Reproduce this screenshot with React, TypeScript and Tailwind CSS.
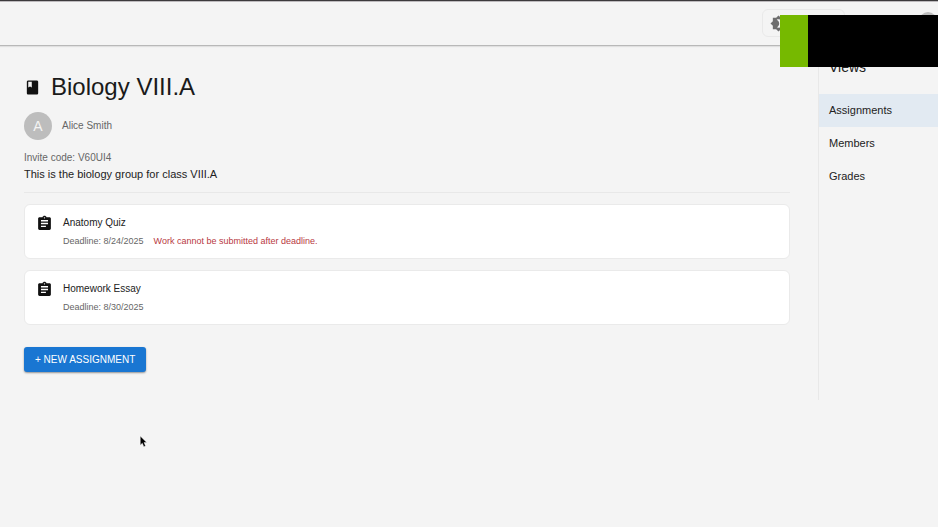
import { MdAssignment, MdBrightness4, MdClass } from "react-icons/md";

type Assignment = {
  id: string;
  title: string;
  deadline: string;
  warning?: string;
};

const assignments: Assignment[] = [
  {
    id: "anatomy-quiz",
    title: "Anatomy Quiz",
    deadline: "8/24/2025",
    warning: "Work cannot be submitted after deadline.",
  },
  { id: "homework-essay", title: "Homework Essay", deadline: "8/30/2025" },
];

const views = ["Assignments", "Members", "Grades"];

function Header() {
  return (
    <header className="flex h-[46px] items-start justify-end gap-[74px] border-t border-b border-t-[#3c3a3c] border-b-[#b8b8b8] pr-px shadow-[inset_0_1px_0_#bdbabd,0_1px_1px_rgba(0,0,0,0.08)]">
      <button
        type="button"
        aria-label="Toggle theme"
        className="mt-2 flex h-7 w-[83px] items-center rounded-md border border-[#e9e9e9] pl-[7px] text-[#6e6e6e]"
      >
        <MdBrightness4 size={17} />
      </button>
      <span className="mt-[11px] size-[18px] rounded-full bg-[#bdbdbd]" />
    </header>
  );
}

function AssignmentCard({ assignment }: { assignment: Assignment }) {
  return (
    <li className="flex h-[55px] gap-[10px] rounded-md border border-[#eaeaea] bg-white px-[11px] pt-[10px]">
      <MdAssignment size={17} className="shrink-0 text-[#111]" />
      <div>
        <h2 className="text-[10px] leading-4 text-[#222]">{assignment.title}</h2>
        <p className="mt-1 flex gap-[10px] text-[9px] leading-3 text-[#666]">
          <span>Deadline: {assignment.deadline}</span>
          {assignment.warning && <span className="text-[#b8393f]">{assignment.warning}</span>}
        </p>
      </div>
    </li>
  );
}

function ViewsPanel() {
  return (
    <aside className="h-[354px] w-[120px] shrink-0 border-l border-[#e8e8e8] pt-3">
      <h2 className="px-[10px] text-sm leading-[18px] text-[#222]">Views</h2>
      <nav className="mt-[18px] flex flex-col">
        {views.map((view) => (
          <a
            key={view}
            href={`#${view.toLowerCase()}`}
            className={
              view === "Assignments"
                ? "bg-[#e2eaf2] px-[10px] text-[11px] leading-[33px] text-[#222]"
                : "px-[10px] text-[11px] leading-[33px] text-[#222]"
            }
          >
            {view}
          </a>
        ))}
      </nav>
    </aside>
  );
}

export default function App() {
  return (
    <div className="relative min-h-screen overflow-hidden bg-[#f4f4f4] font-['Liberation_Sans',Arial,sans-serif]">
      <Header />

      <div className="flex items-start">
        <main className="min-w-0 flex-1 pt-[23px] pr-7 pl-6">
          <div className="flex items-center gap-[10px]">
            <MdClass size={17} className="text-[#111]" />
            <h1 className="text-2xl leading-9 text-[#1a1a1a]">Biology VIII.A</h1>
          </div>

          <div className="mt-[7px] flex items-center gap-[10px]">
            <span className="flex size-7 items-center justify-center rounded-full bg-[#bdbdbd] text-sm text-[#f4f4f4]">
              A
            </span>
            <span className="text-[10px] leading-4 text-[#666]">Alice Smith</span>
          </div>

          <p className="mt-[10px] text-[10px] leading-4 text-[#666]">Invite code: V60UI4</p>
          <p className="text-[11px] leading-4 text-[#222]">This is the biology group for class VIII.A</p>

          <hr className="mt-[10px] border-[#e8e8e8]" />

          <ul className="mt-[11px] flex flex-col gap-[11px]">
            {assignments.map((assignment) => (
              <AssignmentCard key={assignment.id} assignment={assignment} />
            ))}
          </ul>

          <button
            type="button"
            className="mt-[22px] h-[25px] rounded-[3px] bg-[#1976d2] px-[11px] text-[10px] text-white uppercase shadow-[0_1px_2px_rgba(0,0,0,0.4)]"
          >
            + New assignment
          </button>
        </main>

        <ViewsPanel />
      </div>

      {/* Caption bar floating over the top right corner */}
      <div className="absolute top-[15px] right-0 flex h-[52px] w-[158px] bg-black">
        <div className="w-7 bg-[#76b900]" />
      </div>

      {/* Mouse pointer */}
      <svg className="absolute top-[435px] left-[139px]" width="9" height="13" viewBox="0 0 8 12" aria-hidden="true">
        <path
          d="M1 1v8.4l1.9-1.8 1.4 3.2 1.6-.7-1.4-3.1H7z"
          fill="#000"
          stroke="#fff"
          strokeWidth="0.4"
        />
      </svg>
    </div>
  );
}
